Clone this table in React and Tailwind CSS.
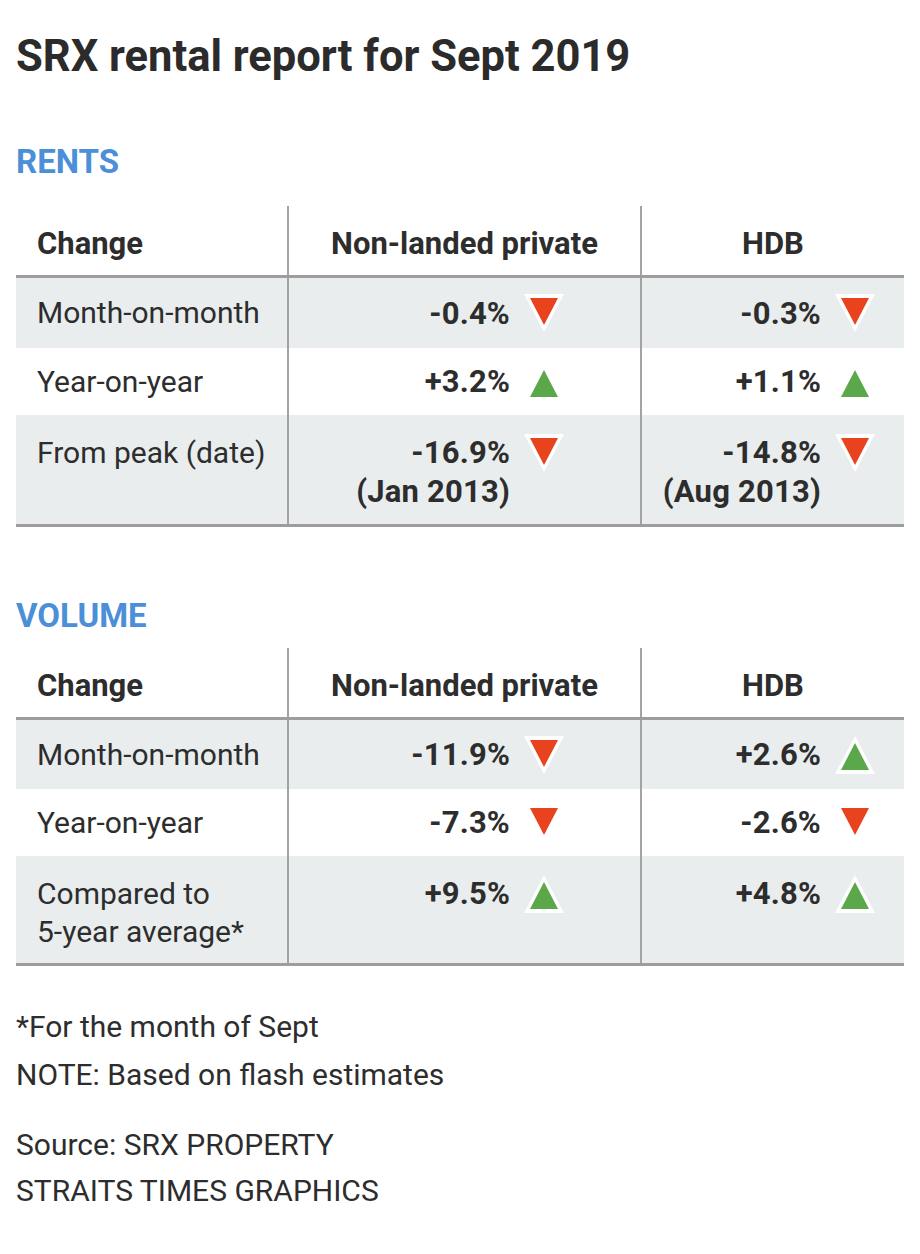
import React from 'react';

const Arrow = ({ dir }) => {
  if (dir === 'up') {
    return (
      <svg width="40" height="38" viewBox="0 0 40 38" className="shrink-0">
        <polygon points="20,0 40,38 0,38" fill="#ffffff" />
        <polygon points="20,7 34,34 6,34" fill="#5ba84a" />
      </svg>
    );
  }
  return (
    <svg width="40" height="38" viewBox="0 0 40 38" className="shrink-0">
      <polygon points="0,0 40,0 20,38" fill="#ffffff" />
      <polygon points="6,4 34,4 20,31" fill="#e9421f" />
    </svg>
  );
};

const ValueCell = ({ value, sub, dir, hdb, tall }) => (
  <div
    className={`flex justify-end gap-[14px] border-l-2 border-[#a3a3a3] ${
      hdb ? 'pr-[29px]' : 'pr-[76px]'
    } ${tall ? 'items-start pt-[18px]' : 'items-center'}`}
  >
    <div className="text-right text-[31px] font-bold leading-[39px] tracking-[0.2px] text-[#2d2d2d]">
      <div>{value}</div>
      {sub && <div>{sub}</div>}
    </div>
    <div className="flex h-[39px] items-center">
      <Arrow dir={dir} />
    </div>
  </div>
);

const Table = ({ rows, heights }) => (
  <div className="border-b-[3px] border-[#9d9d9d]">
    <div className="grid h-[72px] grid-cols-[271px_353px_264px] border-b-[3px] border-[#9d9d9d] text-[31px] font-bold leading-[36px] text-[#2d2d2d]">
      <div className="pl-[21px] pt-[20px]">Change</div>
      <div className="border-l-2 border-[#a3a3a3] pt-[20px] text-center">Non-landed private</div>
      <div className="border-l-2 border-[#a3a3a3] pt-[20px] text-center">HDB</div>
    </div>
    {rows.map((row, i) => (
      <div
        key={i}
        className={`grid grid-cols-[271px_353px_264px] ${i % 2 === 0 ? 'bg-[#e9edee]' : 'bg-white'}`}
        style={{ height: heights[i] }}
      >
        <div
          className={`pl-[21px] text-[30px] leading-[38px] text-[#2d2d2d] ${
            row.tall ? 'pt-[19px]' : 'flex items-center'
          }`}
        >
          <div>
            {row.label.map((l) => (
              <div key={l}>{l}</div>
            ))}
          </div>
        </div>
        <ValueCell value={row.a} sub={row.aSub} dir={row.aDir} tall={row.tall} />
        <ValueCell value={row.b} sub={row.bSub} dir={row.bDir} tall={row.tall} hdb />
      </div>
    ))}
  </div>
);

const rents = [
  { label: ['Month-on-month'], a: '-0.4%', aDir: 'down', b: '-0.3%', bDir: 'down' },
  { label: ['Year-on-year'], a: '+3.2%', aDir: 'up', b: '+1.1%', bDir: 'up' },
  {
    label: ['From peak (date)'],
    a: '-16.9%',
    aSub: '(Jan 2013)',
    aDir: 'down',
    b: '-14.8%',
    bSub: '(Aug 2013)',
    bDir: 'down',
    tall: true,
  },
];

const volume = [
  { label: ['Month-on-month'], a: '-11.9%', aDir: 'down', b: '+2.6%', bDir: 'up' },
  { label: ['Year-on-year'], a: '-7.3%', aDir: 'down', b: '-2.6%', bDir: 'down' },
  {
    label: ['Compared to', '5-year average*'],
    a: '+9.5%',
    aDir: 'up',
    b: '+4.8%',
    bDir: 'up',
    tall: true,
  },
];

export default function App() {
  return (
    <div className="h-[1254px] w-[920px] bg-white px-4 font-['Roboto',sans-serif] text-[#2d2d2d]">
      <h1 className="pt-[31px] text-[43.5px] font-bold leading-[52px] text-[#2b2b2b]">
        SRX rental report for Sept 2019
      </h1>

      <h2 className="mt-[59px] text-[33px] font-bold leading-[40px] text-[#4b8fd8]">RENTS</h2>
      <div className="mt-[24px]">
        <Table rows={rents} heights={[70, 67, 109]} />
      </div>

      <h2 className="mt-[69px] text-[33px] font-bold leading-[40px] text-[#4b8fd8]">VOLUME</h2>
      <div className="mt-[12px]">
        <Table rows={volume} heights={[69, 67, 107]} />
      </div>

      <div className="mt-[37px] text-[30px] leading-[48px]">
        <p>*For the month of Sept</p>
        <p>NOTE: Based on flash estimates</p>
      </div>
      <div className="mt-[23px] text-[30px] leading-[46px]">
        <p>Source: SRX PROPERTY</p>
        <p>STRAITS TIMES GRAPHICS</p>
      </div>
    </div>
  );
}
